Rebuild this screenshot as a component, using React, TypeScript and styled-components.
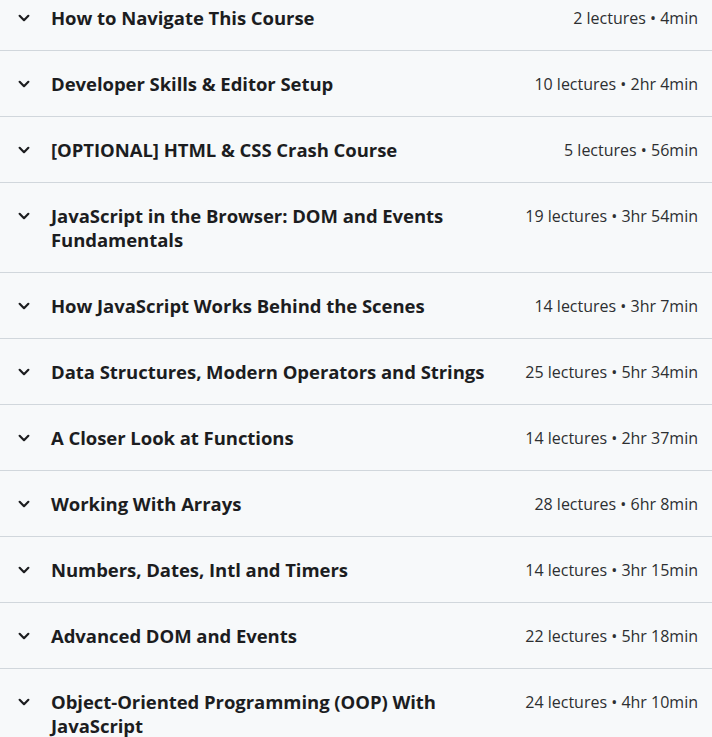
import styled, { createGlobalStyle } from 'styled-components';

const GlobalStyle = createGlobalStyle`
  html, body {
    margin: 0;
    padding: 0;
    background: #f7f9fa;
    font-family: 'Open Sans', 'Noto Sans', sans-serif;
    color: #2d2f31;
  }
`;

const List = styled.div`
  margin-top: -15px;
  background: #f7f9fa;
`;

const Row = styled.div`
  display: flex;
  align-items: flex-start;
  padding: 21px 14px 20px 16px;
  border-bottom: 1px solid #d1d7dc;
`;

const Chevron = styled.span`
  flex: none;
  width: 16px;
  height: 24px;
  margin-right: 19px;
  display: flex;
  align-items: center;
  justify-content: center;

  & > svg {
    width: 14px;
    height: 14px;
  }
`;

const Title = styled.div`
  flex: 1;
  font-size: 18.5px;
  font-weight: 700;
  line-height: 24px;
  letter-spacing: -0.05px;
  color: #1c1d1f;
  padding-right: 24px;
`;

const Meta = styled.div`
  flex: none;
  font-size: 16px;
  line-height: 24px;
  color: #2d2f31;
  white-space: nowrap;
`;

const sections = [
  { title: 'How to Navigate This Course', lectures: 2, time: '4min' },
  { title: 'Developer Skills & Editor Setup', lectures: 10, time: '2hr 4min' },
  { title: '[OPTIONAL] HTML & CSS Crash Course', lectures: 5, time: '56min' },
  { title: 'JavaScript in the Browser: DOM and Events Fundamentals', lectures: 19, time: '3hr 54min' },
  { title: 'How JavaScript Works Behind the Scenes', lectures: 14, time: '3hr 7min' },
  { title: 'Data Structures, Modern Operators and Strings', lectures: 25, time: '5hr 34min' },
  { title: 'A Closer Look at Functions', lectures: 14, time: '2hr 37min' },
  { title: 'Working With Arrays', lectures: 28, time: '6hr 8min' },
  { title: 'Numbers, Dates, Intl and Timers', lectures: 14, time: '3hr 15min' },
  { title: 'Advanced DOM and Events', lectures: 22, time: '5hr 18min' },
  { title: 'Object-Oriented Programming (OOP) With JavaScript', lectures: 24, time: '4hr 10min' },
];

const ChevronIcon = () => (
  <svg viewBox="0 0 16 16" fill="none">
    <path d="M3 5.5l5 5 5-5" stroke="#1c1d1f" strokeWidth="2.5" strokeLinecap="round" strokeLinejoin="round" />
  </svg>
);

export default function App() {
  return (
    <>
      <GlobalStyle />
      <List>
        {sections.map((s) => (
          <Row key={s.title}>
            <Chevron>
              <ChevronIcon />
            </Chevron>
            <Title>{s.title}</Title>
            <Meta>
              {s.lectures} lectures • {s.time}
            </Meta>
          </Row>
        ))}
      </List>
    </>
  );
}
